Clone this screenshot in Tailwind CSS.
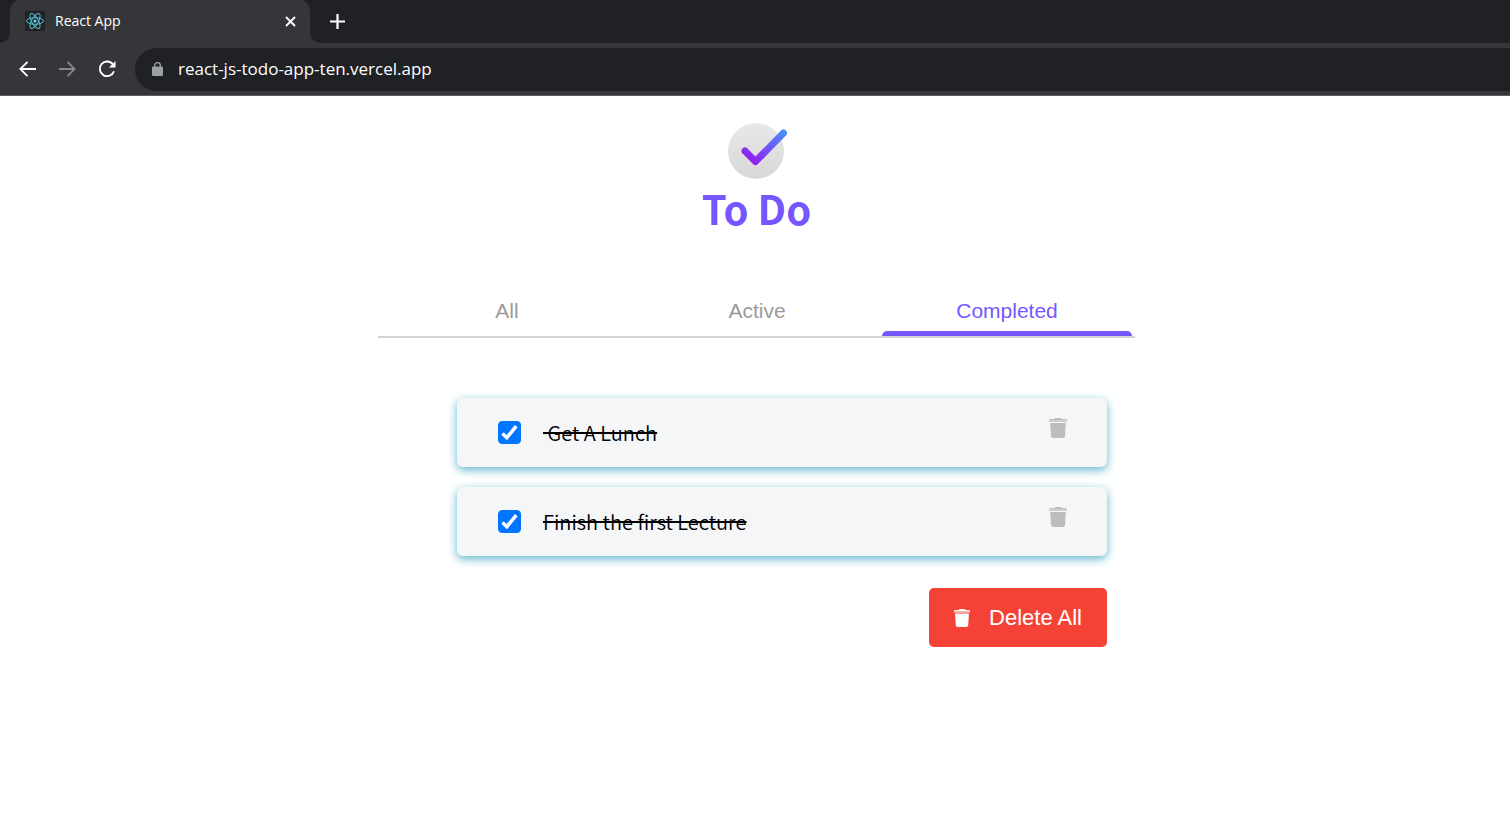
<!DOCTYPE html>
<html lang="en">
<head>
<meta charset="utf-8">
<meta name="viewport" content="width=device-width, initial-scale=1">
<title>React App</title>
<script src="https://cdn.jsdelivr.net/npm/@tailwindcss/browser@4"></script>
</head>
<body class="min-h-screen bg-white font-['Liberation_Sans',sans-serif] text-black">
<svg class="hidden" aria-hidden="true">
  <symbol id="trash" viewBox="0 0 18 20">
    <path d="M0 1.300 5 1Q5.700 0 7 0h4q1.300 0 2 1l5 .3V2.500H0Z"/>
    <path opacity=".75" d="M0 2.500h18V4H0Z"/>
    <path d="M1.200 5h15.600l-.8 13.200Q15.900 20 14 20H4Q2.100 20 2 18.200Z"/>
  </symbol>
  <symbol id="check" viewBox="0 0 23 23">
    <path d="m4.500 12.500 4.300 4.200L18.300 5.200" fill="none" stroke="currentColor" stroke-width="3.600"/>
  </symbol>
</svg>

<header class="border-b border-[#5b5c5f] bg-[#35363a] font-['Open_Sans','Noto_Sans',sans-serif] text-white">
  <div class="flex h-[43px] bg-[#35363a]">
    <div class="w-[10px] rounded-br-[10px] bg-[#202124]"></div>
    <div class="w-[300px] bg-[#202124]">
      <div class="flex h-full items-center rounded-t-[10px] bg-[#35363a] pr-[12px] pb-px pl-[15px]">
        <svg class="size-5" viewBox="0 0 20 20" fill="none" stroke="#53bdd8" stroke-width="1" aria-hidden="true">
          <rect width="20" height="20" rx="1" fill="#222" stroke="none"/>
          <ellipse cx="10" cy="10" rx="8.500" ry="3.300"/>
          <ellipse cx="10" cy="10" rx="8.500" ry="3.300" transform="rotate(60 10 10)"/>
          <ellipse cx="10" cy="10" rx="8.500" ry="3.300" transform="rotate(120 10 10)"/>
          <circle cx="10" cy="10" r="1.600" fill="#61dafb" stroke="none"/>
        </svg>
        <span class="ml-[10px] flex-1 text-[14px] leading-5">React App</span>
        <button type="button" aria-label="Close tab" class="p-[2px]">
          <svg class="size-[11px]" viewBox="0 0 11 11" stroke="currentColor" stroke-width="1.800" fill="none"><path d="m1 1 9 9m0-9-9 9"/></svg>
        </button>
      </div>
    </div>
    <div class="flex flex-1 items-center rounded-bl-[10px] bg-[#202124] pl-[20px]">
      <button type="button" aria-label="New tab">
        <svg class="size-[15px]" viewBox="0 0 15 15" stroke="currentColor" stroke-width="2.200" fill="none"><path d="M7.500 0v15M0 7.500h15"/></svg>
      </button>
    </div>
  </div>
  <div class="flex h-[52px] items-center pl-[19px]">
    <button type="button" aria-label="Back">
      <svg class="size-[17px]" viewBox="0 0 17 17" stroke="currentColor" stroke-width="1.800" fill="none"><path d="M17 8H1.500M8.500 .8 1.300 8l7.200 7.200"/></svg>
    </button>
    <button type="button" aria-label="Forward" class="ml-[23px] text-[#87888b]">
      <svg class="size-[17px]" viewBox="0 0 17 17" stroke="currentColor" stroke-width="1.800" fill="none"><path d="M0 8h15.500M8.500 .8 15.700 8l-7.200 7.200"/></svg>
    </button>
    <button type="button" aria-label="Reload" class="ml-[22px]">
      <svg class="size-[18px]" viewBox="0 0 18 18" fill="none"><path d="M15 4.500A7.300 7.300 0 1 0 16 11.200" stroke="currentColor" stroke-width="1.900"/><path d="M17.500 1v6.500H11Z" fill="currentColor"/></svg>
    </button>
    <div class="ml-[19px] flex h-[43px] flex-1 items-center rounded-l-full bg-[#202124] pl-[17px]">
      <svg class="h-[14px] w-[11px] text-[#9aa0a6]" viewBox="0 0 11 14" aria-hidden="true"><rect y="4.500" width="11" height="9.500" rx="1.200" fill="currentColor"/><path d="M2.700 5.500V3.500a2.800 2.800 0 0 1 5.600 0v2" fill="none" stroke="currentColor" stroke-width="1.300"/></svg>
      <input type="text" aria-label="Address" value="react-js-todo-app-ten.vercel.app" class="ml-[15px] min-w-0 flex-1 bg-transparent text-[17px] leading-6 outline-none">
    </div>
  </div>
</header>

<main class="pt-[27px] pl-[3px]">
  <div class="mx-auto max-w-[757px]">
  <div class="flex flex-col items-center">
    <svg class="h-[57px] w-[60px]" viewBox="0 0 60 57" aria-hidden="true">
      <defs>
        <linearGradient id="disc" x1="0" y1="0" x2="0" y2="1"><stop stop-color="#e9e9e9"/><stop offset="1" stop-color="#d7d7d7"/></linearGradient>
        <linearGradient id="tick" gradientUnits="userSpaceOnUse" x1="28" y1="42" x2="50" y2="4"><stop stop-color="#951bf3"/><stop offset="1" stop-color="#4b93fb"/></linearGradient>
      </defs>
      <circle cx="29" cy="28" r="28" fill="url(#disc)"/>
      <path d="M18 28 28.500 38.500 56.500 10" fill="none" stroke="url(#tick)" stroke-width="7" stroke-linecap="round" stroke-linejoin="round"/>
    </svg>
    <h1 class="font-['Noto_Sans_CJK_JP',sans-serif] text-[40px] leading-[56px] font-bold text-[#7556ff]">To Do</h1>
  </div>

  <nav aria-label="Filter" class="mt-[50px] border-b-2 border-[#d3d3d3] pr-[3px] pl-[4px]">
    <div class="grid grid-cols-3 text-center text-[21px] leading-[25px] text-[#9a9a9a]">
      <a href="#all" class="pt-[12px] pb-[13px]">All</a>
      <a href="#active" class="pt-[12px] pb-[13px]">Active</a>
      <a href="#completed" aria-current="page" class="flex flex-col pt-[12px] text-[#7556ff]">Completed<span class="mt-auto h-[5px] rounded-t-[5px] bg-[#7556ff]"></span></a>
    </div>
  </nav>

  <section aria-label="Completed tasks" class="mt-[60px] mr-[28px] ml-[79px] flex flex-col gap-5">
    <div class="flex h-[69px] items-center rounded-[6px] bg-[#f4f6f8] pr-[40px] pl-[41px] shadow-[0_3px_10px_#60b6cf]">
      <span class="grid text-white">
        <input id="t1" type="checkbox" checked class="peer col-start-1 row-start-1 size-[23px] appearance-none rounded-[4px] border border-[#767676] bg-white checked:border-[#0075ff] checked:bg-[#0075ff]">
        <svg class="pointer-events-none invisible col-start-1 row-start-1 size-[23px] peer-checked:visible" aria-hidden="true"><use href="#check"/></svg>
      </span>
      <label for="t1" class="ml-[22px] flex-1 font-['Noto_Sans_CJK_JP',sans-serif] text-[20px] leading-[30px] font-[350] whitespace-pre line-through"> Get A Lunch</label>
      <button type="button" aria-label="Delete Get A Lunch" class="mb-[9px] text-[#bdbdbd]"><svg class="h-5 w-[18px]" fill="currentColor"><use href="#trash"/></svg></button>
    </div>
    <div class="flex h-[69px] items-center rounded-[6px] bg-[#f4f6f8] pr-[40px] pl-[41px] shadow-[0_3px_10px_#60b6cf]">
      <span class="grid text-white">
        <input id="t2" type="checkbox" checked class="peer col-start-1 row-start-1 size-[23px] appearance-none rounded-[4px] border border-[#767676] bg-white checked:border-[#0075ff] checked:bg-[#0075ff]">
        <svg class="pointer-events-none invisible col-start-1 row-start-1 size-[23px] peer-checked:visible" aria-hidden="true"><use href="#check"/></svg>
      </span>
      <label for="t2" class="ml-[22px] flex-1 font-['Noto_Sans_CJK_JP',sans-serif] text-[20px] leading-[30px] font-[350] whitespace-pre line-through">Finish the first Lecture</label>
      <button type="button" aria-label="Delete Finish the first Lecture" class="mb-[9px] text-[#bdbdbd]"><svg class="h-5 w-[18px]" fill="currentColor"><use href="#trash"/></svg></button>
    </div>
    <button type="button" class="mt-[12px] flex h-[59px] items-center gap-[19px] self-end rounded-[5px] bg-[#f44336] px-[25px] text-[22px] text-white">
      <svg class="h-[18px] w-4" fill="currentColor" aria-hidden="true"><use href="#trash"/></svg>Delete All
    </button>
  </section>
  </div>
</main>
</body>
</html>
